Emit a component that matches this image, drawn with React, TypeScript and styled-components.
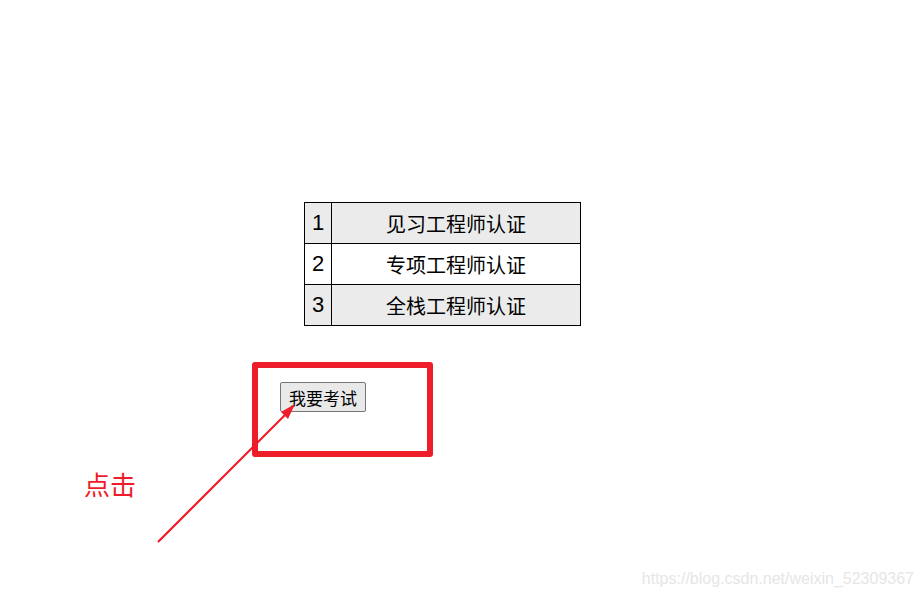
import React from 'react';
import styled, { createGlobalStyle } from 'styled-components';

const GlobalStyle = createGlobalStyle`
  html, body {
    margin: 0;
    padding: 0;
    background: #ffffff;
  }
  body {
    font-family: "Noto Sans CJK SC", "Noto Sans", sans-serif;
    color: #000000;
  }
`;

const Page = styled.div`
  position: relative;
  width: 923px;
  height: 600px;
  overflow: hidden;
`;

const Content = styled.div`
  display: flex;
  flex-direction: column;
  align-items: flex-start;
  padding: 202px 0 0 304px;
`;

const CertTable = styled.table`
  border-collapse: collapse;
  width: 277px;
  font-size: 20px;
  font-family: "Noto Sans CJK SC", "Liberation Sans", sans-serif;
`;

const Row = styled.tr<{ $shaded: boolean }>`
  height: 41px;
  background: ${({ $shaded }) => ($shaded ? '#ebebeb' : '#ffffff')};
`;

const NumCell = styled.td`
  width: 26px;
  border: 1px solid #000000;
  text-align: center;
  padding: 0;
  font-size: 22px;
  font-family: "Liberation Sans", sans-serif;
`;

const NameCell = styled.td`
  border: 1px solid #000000;
  text-align: center;
  padding: 0;
`;

const ButtonArea = styled.div`
  margin: 56px 0 0 -24px;
`;

const ExamButton = styled.button`
  height: 30px;
  padding: 0 8px;
  font-size: 17px;
  font-family: "Noto Sans CJK SC", sans-serif;
  background: #e9e9e9;
  border: 1px solid #767676;
  border-radius: 2px;
  color: #000000;
  line-height: 1;
`;

const HighlightBox = styled.div`
  position: absolute;
  left: 252px;
  top: 362px;
  width: 169px;
  height: 83px;
  border: 6px solid #ee1d2a;
  border-radius: 3px;
  pointer-events: none;
`;

const ArrowLayer = styled.svg`
  position: absolute;
  left: 0;
  top: 0;
  pointer-events: none;
`;

const ClickLabel = styled.div`
  position: absolute;
  left: 84px;
  top: 468px;
  font-size: 26px;
  line-height: 1.2;
  color: #ee1d2a;
  font-family: "Noto Sans CJK SC", sans-serif;
`;

const Watermark = styled.div`
  position: absolute;
  right: 9px;
  top: 570px;
  font-size: 16px;
  color: #e6e6e6;
  font-family: "Liberation Sans", sans-serif;
`;

const certs = ['见习工程师认证', '专项工程师认证', '全栈工程师认证'];

export default function App() {
  return (
    <Page>
      <GlobalStyle />
      <Content>
        <CertTable>
          <tbody>
            {certs.map((name, i) => (
              <Row key={name} $shaded={i % 2 === 0}>
                <NumCell>{i + 1}</NumCell>
                <NameCell>{name}</NameCell>
              </Row>
            ))}
          </tbody>
        </CertTable>
        <ButtonArea>
          <ExamButton>我要考试</ExamButton>
        </ButtonArea>
      </Content>
      <HighlightBox />
      <ArrowLayer width="923" height="600" viewBox="0 0 923 600">
        <line x1="158" y1="542" x2="286" y2="414" stroke="#ee1d2a" strokeWidth="2.2" />
        <polygon points="295,404 281,412 288,419" fill="#ee1d2a" />
      </ArrowLayer>
      <ClickLabel>点击</ClickLabel>
      <Watermark>https://blog.csdn.net/weixin_52309367</Watermark>
    </Page>
  );
}
